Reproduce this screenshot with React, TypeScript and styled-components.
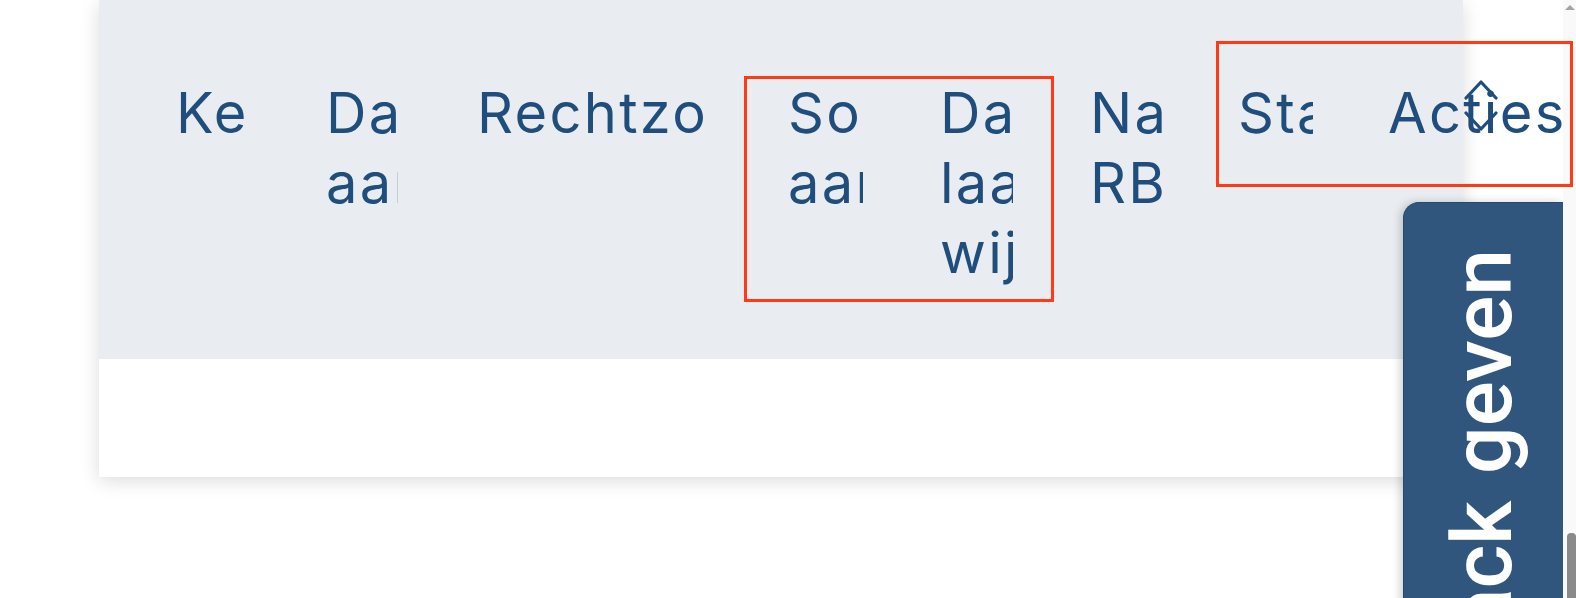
import React from "react";
import styled, { createGlobalStyle } from "styled-components";

const GlobalStyle = createGlobalStyle`
  html, body {
    margin: 0;
    padding: 0;
    background: #ffffff;
    overflow: hidden;
  }
  body {
    font-family: Inter, "Noto Sans", sans-serif;
  }
`;

const Page = styled.div`
  position: relative;
  width: 1576px;
  height: 598px;
  padding-left: 99px;
  box-sizing: border-box;
  overflow: hidden;
`;

const Card = styled.section`
  width: 1364px;
  background: #ffffff;
  box-shadow: 0 4px 18px rgba(0, 0, 0, 0.14);
`;

const HeadRow = styled.div`
  display: grid;
  grid-template-columns: 150px 151px 311px 152px 150px 148px 150px auto;
  padding: 78px 0 0 77px;
  height: 359px;
  box-sizing: border-box;
  background: #e9edf1;
`;

const HeadCell = styled.div<{ $clip?: number }>`
  position: relative;
  width: ${(p) => (p.$clip ? `${p.$clip}px` : "auto")};
  overflow: ${(p) => (p.$clip ? "hidden" : "visible")};
  white-space: ${(p) => (p.$clip ? "normal" : "nowrap")};
  font-size: 56px;
  line-height: 70px;
  letter-spacing: 2.3px;
  font-weight: 400;
  color: #1f4e7d;
`;

const SortIcon = styled.svg`
  position: absolute;
  left: 76px;
  top: 2px;
  width: 34px;
  height: 52px;
`;

const Body = styled.div`
  height: 118px;
  background: #ffffff;
`;

const FeedbackTab = styled.button`
  position: fixed;
  left: 1403px;
  top: 202px;
  width: 160px;
  height: 460px;
  margin: 0;
  padding: 46px 0 0 37px;
  box-sizing: border-box;
  display: flex;
  align-items: flex-start;
  background: #31567e;
  border: 1px solid #244a72;
  border-right: none;
  border-top-left-radius: 16px;
  box-shadow: -3px 0 8px rgba(0, 0, 0, 0.18);
  cursor: pointer;
`;

const FeedbackLabel = styled.span`
  writing-mode: vertical-rl;
  transform: rotate(180deg);
  font-family: Roboto, "Liberation Sans", sans-serif;
  font-size: 84px;
  line-height: 84px;
  word-spacing: 6px;
  font-weight: 500;
  color: #ffffff;
  white-space: nowrap;
`;

const ScrollTrack = styled.div`
  position: fixed;
  top: 0;
  right: 0;
  width: 13px;
  height: 598px;
  display: flex;
  flex-direction: column;
  align-items: flex-end;
  background: #f9f9f9;
`;

const ScrollArrow = styled.div`
  margin: 5px 0 0;
  align-self: center;
  width: 0;
  height: 0;
  border-left: 5px solid transparent;
  border-right: 5px solid transparent;
  border-bottom: 5px solid #a3a3a3;
`;

const ScrollThumb = styled.div`
  margin-top: auto;
  width: 9px;
  height: 65px;
  border-radius: 4px 4px 0 0;
  background: #8a8a8a;
`;

const AnnotationLayer = styled.div`
  position: fixed;
  inset: 0;
  z-index: 10;
  pointer-events: none;
`;

const Annotation = styled.div`
  position: absolute;
  box-sizing: border-box;
  border: 3px solid #ff3a14;
`;

type Col = { label: string; clip?: number };

const columns: Col[] = [
  { label: "Kenmerk", clip: 72 },
  { label: "Datum aanvraag", clip: 72 },
  { label: "Rechtzoekende", clip: 231 },
  { label: "Soort aanvraag", clip: 75 },
  { label: "Datum laatste wijziging", clip: 73 },
  { label: "Naam RB", clip: 73 },
  { label: "Status", clip: 75 },
];

const boxes = [
  { left: 744, top: 76, width: 310, height: 226 },
  { left: 1216, top: 41, width: 357, height: 146 },
];

export default function App() {
  return (
    <>
      <GlobalStyle />
      <Page>
        <Card>
          <HeadRow>
            {columns.map((c) => (
              <HeadCell key={c.label} $clip={c.clip}>
                {c.label}
              </HeadCell>
            ))}
            <HeadCell>
              Acties
              <SortIcon viewBox="0 0 34 52" fill="none" stroke="#1f4e7d" strokeWidth={3.2} strokeLinecap="round" strokeLinejoin="round">
                <path d="M2 18 L17 2 L32 18" />
                <path d="M2 33 L17 49 L32 33" />
              </SortIcon>
            </HeadCell>
          </HeadRow>
          <Body />
        </Card>
      </Page>
      <FeedbackTab type="button">
        <FeedbackLabel>Feedback geven</FeedbackLabel>
      </FeedbackTab>
      <ScrollTrack>
        <ScrollArrow />
        <ScrollThumb />
      </ScrollTrack>
      <AnnotationLayer>
        {boxes.map((b, i) => (
          <Annotation key={i} style={{ left: b.left, top: b.top, width: b.width, height: b.height }} />
        ))}
      </AnnotationLayer>
    </>
  );
}
